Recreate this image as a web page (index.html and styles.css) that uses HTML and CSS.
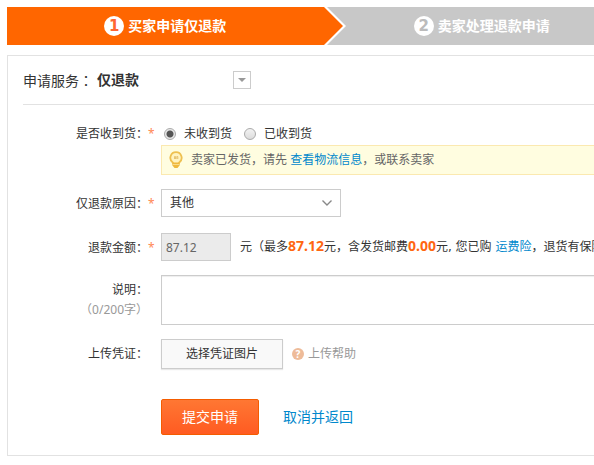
FILE: index.html
```html
<!DOCTYPE html>
<html lang="zh-CN">
<head>
    <meta charset="UTF-8">
    <meta name="viewport" content="width=device-width, initial-scale=1.0">
    <title>申请退款</title>
    <link rel="stylesheet" href="styles.css">
</head>
<body>
    <div class="page">
        <ol class="steps">
            <li class="step active">
                <span class="step-num">1</span>买家申请仅退款
                <svg class="step-arrow" width="22" height="38" viewBox="0 0 22 38">
                    <path fill="#fff" d="M0 0h3l19 19-19 19H0z"/>
                    <path fill="#ff6600" d="M0 0l19 19L0 38z"/>
                </svg>
            </li>
            <li class="step"><span class="step-num">2</span>卖家处理退款申请</li>
        </ol>

        <form class="panel">
            <div class="service">
                <span>申请服务<span class="colon" lang="ja">：</span></span>
                <strong class="service-name">仅退款</strong>
                <button type="button" class="service-toggle" aria-label="切换服务"></button>
            </div>

            <div class="row row-received">
                <div class="label" id="receivedLabel">是否收到货：<i>*</i></div>
                <div class="field radios" role="radiogroup" aria-labelledby="receivedLabel">
                    <label class="radio"><input type="radio" name="received" checked>未收到货</label>
                    <label class="radio"><input type="radio" name="received">已收到货</label>
                </div>
            </div>

            <div class="notice">
                <svg width="14" height="18" viewBox="0 0 14 18">
                    <path d="M7 1.200a5.600 5.600 0 0 0-3.500 10L4.500 13h5l1-1.800A5.600 5.600 0 0 0 7 1.200z" fill="#fff3c0" stroke="#eec050" stroke-width="1.800"/>
                    <path d="M5.500 8V5.500h1V8M7.800 8V5.500h1V8" fill="none" stroke="#e0b860" stroke-width=".8"/>
                    <path d="M3.500 11.500h7v3L8.500 17h-3l-2-2.500z" fill="#efb83c"/>
                    <path d="M4 13.500h6" stroke="#fbe29a" stroke-width=".8"/>
                </svg>
                <span>卖家已发货，请先 <a href="#">查看物流信息</a>，或联系卖家</span>
            </div>

            <div class="row row-reason">
                <label class="label" for="reason">仅退款原因：<i>*</i></label>
                <div class="field select-box">
                    <select id="reason">
                        <option>其他</option>
                    </select>
                    <svg class="chevron" width="10" height="6" viewBox="0 0 10 6">
                        <path d="M.5.5L5 5 9.500.5" fill="none" stroke="#888" stroke-width="1.4"/>
                    </svg>
                </div>
            </div>

            <div class="row">
                <label class="label" for="amount">退款金额：<i>*</i></label>
                <div class="field amount">
                    <input type="text" id="amount" value="87.12" disabled>
                    <span class="amount-tip">元（最多<b>87.12</b>元，含发货邮费<b>0.00</b>元, 您已购 <a href="#">运费险</a>，退货有保障）</span>
                </div>
            </div>

            <div class="row">
                <label class="label no-star" for="remark">说明：<small>（0/200字）</small></label>
                <div class="field">
                    <textarea id="remark"></textarea>
                </div>
            </div>

            <div class="row">
                <div class="label no-star">上传凭证：</div>
                <div class="field upload">
                    <button type="button" class="upload-btn">选择凭证图片</button>
                    <a href="#" class="help"><span class="help-icon">?</span>上传帮助</a>
                </div>
            </div>

            <div class="actions">
                <button type="submit" class="submit-btn">提交申请</button>
                <a href="#">取消并返回</a>
            </div>
        </form>
    </div>
</body>
</html>
```

FILE: styles.css
```css
* {
    margin: 0;
    padding: 0;
    box-sizing: border-box;
}

body {
    background-color: #fff;
    color: #333;
    font: 12px/20px "Noto Sans", "Noto Sans CJK SC", sans-serif;
    overflow-x: hidden;
}

button,
input,
select,
textarea {
    font: inherit;
    color: inherit;
    border-radius: 0;
}

button {
    cursor: pointer;
}

a {
    color: #0088cc;
    text-decoration: none;
}

.page {
    min-width: 640px;
    padding: 7px 0 8px 7px;
}

/* progress steps */
.steps {
    display: flex;
    list-style: none;
    margin-bottom: 10px;
    background-color: #c8c8c8;
}

.step {
    position: relative;
    flex: 1;
    display: flex;
    align-items: center;
    justify-content: center;
    gap: 4px;
    height: 38px;
    color: #fff;
    font-size: 14px;
    font-weight: bold;
}

.step.active {
    background-color: #ff6600;
}

.step-num {
    width: 20px;
    height: 20px;
    border-radius: 50%;
    background-color: #fff;
    color: #bbb;
    font: bold 15px/20px "DejaVu Sans", sans-serif;
    text-align: center;
}

.active .step-num {
    color: #ff6633;
}

.step-arrow {
    position: absolute;
    left: 100%;
    top: 0;
    z-index: 1;
}

/* form panel */
.panel {
    border: 1px solid #e2e2e2;
    padding: 0 0 20px 15px;
}

.service {
    display: flex;
    align-items: center;
    height: 49px;
    margin-bottom: 19px;
    border-bottom: 1px solid #e2e2e2;
    font-size: 14px;
    gap: 4px;
}

.colon {
    font-family: "Noto Sans CJK JP", sans-serif;
}

.service-name {
    width: 132px;
}

.service-toggle {
    display: flex;
    align-items: center;
    justify-content: center;
    width: 18px;
    height: 18px;
    border: 1px solid #ccc;
    background-color: #fff;
}

.service-toggle::before {
    content: "";
    border: 4px solid transparent;
    border-top-color: #999;
    border-bottom: 0;
}

.row {
    display: flex;
    gap: 7px;
    margin-bottom: 14px;
}

.row-received {
    margin-bottom: 1px;
}

.row-reason {
    margin-bottom: 16px;
}

.label {
    flex: none;
    width: 131px;
    padding-top: 5px;
    text-align: right;
}

.row-received .label {
    padding-top: 0;
}

.label i {
    display: inline-block;
    width: 6px;
    color: #ff8855;
    font-style: normal;
}

.no-star {
    padding-right: 6px;
}

.label small {
    display: block;
    color: #999;
    font-size: 12px;
}

.field {
    flex: 1;
    white-space: nowrap;
}

.radios {
    display: flex;
    gap: 9px;
}

.radio {
    display: flex;
    align-items: center;
}

.radio input {
    appearance: none;
    width: 12px;
    height: 12px;
    margin: 0 8px 0 3px;
    border: 1px solid #aaa;
    border-radius: 50%;
    background: linear-gradient(#f2f2f2, #dcdcdc);
}

.radio input:checked {
    background: radial-gradient(#555 0 3px, #e8e8e8 4px);
}

.notice {
    display: flex;
    align-items: center;
    gap: 8px;
    height: 30px;
    margin: 0 0 14px 138px;
    padding-left: 7px;
    border: 1px solid #fbe9b0;
    background-color: #fffde0;
    color: #666;
}

.select-box {
    position: relative;
    flex: none;
    width: 180px;
}

.select-box select {
    appearance: none;
    display: block;
    width: 100%;
    height: 28px;
    padding: 0 8px;
    border: 1px solid #ccc;
    background-color: #fff;
}

.chevron {
    position: absolute;
    right: 9px;
    top: 11px;
    pointer-events: none;
}

.amount {
    display: flex;
    gap: 9px;
    line-height: 26px;
}

.amount input {
    width: 70px;
    height: 28px;
    padding: 0 4px;
    border: 1px solid #ccc;
    background-color: #ebebeb;
    color: #666;
}

.amount-tip {
    font-family: "DejaVu Sans", "Noto Sans CJK SC", sans-serif;
}

.amount b {
    color: #ff6611;
    font-family: "Noto Sans", sans-serif;
    font-size: 14px;
}

textarea {
    display: block;
    width: 100%;
    height: 50px;
    padding: 4px;
    border: 1px solid #ccc;
    box-shadow: inset 0 1px 1px #eee;
    resize: none;
}

.upload {
    display: flex;
    align-items: center;
    gap: 9px;
}

.upload-btn {
    width: 122px;
    height: 30px;
    border: 1px solid #ccc;
    background-color: #f9f9f9;
    box-shadow: 0 1px 1px #e8e8e8;
}

.help {
    display: flex;
    align-items: center;
    gap: 4px;
    color: #999;
}

.help-icon {
    width: 12px;
    height: 12px;
    border-radius: 50%;
    background-color: #eebb99;
    color: #fff;
    font-size: 10px;
    font-weight: bold;
    line-height: 12px;
    text-align: center;
}

.actions {
    display: flex;
    align-items: center;
    gap: 24px;
    margin: 30px 0 0 138px;
    font-size: 14px;
}

.submit-btn {
    width: 98px;
    height: 36px;
    border: 1px solid #f45c00;
    border-radius: 2px;
    background: linear-gradient(#ff7733, #ff5b22);
    color: #fff;
}
```
